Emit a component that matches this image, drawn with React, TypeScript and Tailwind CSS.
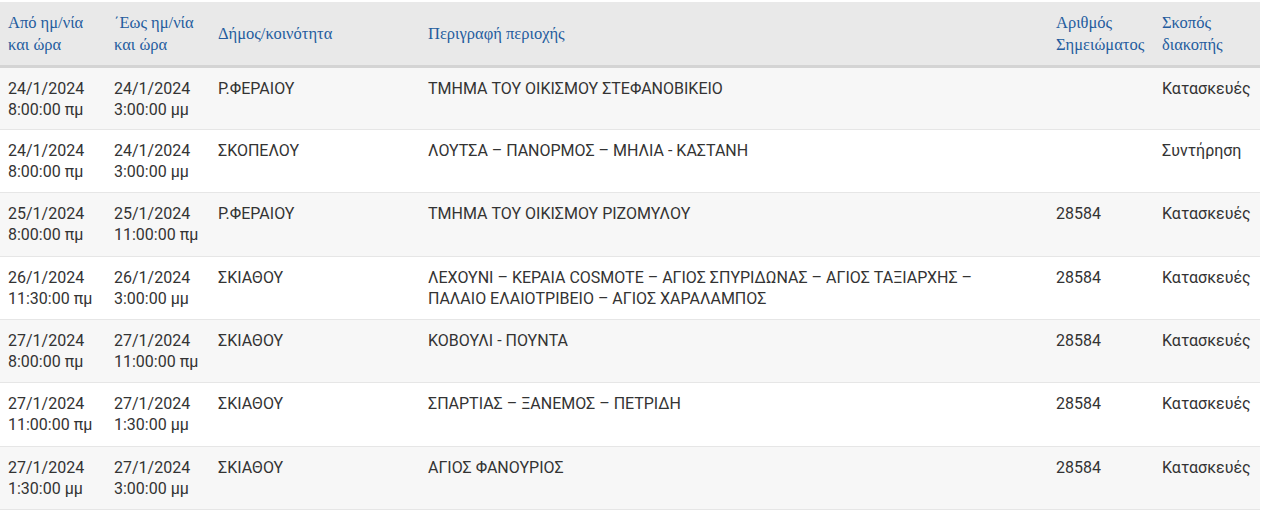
const rows = [
  { from: ['24/1/2024', '8:00:00 πμ'], to: ['24/1/2024', '3:00:00 μμ'], dim: 'Ρ.ΦΕΡΑΙΟΥ', desc: ['ΤΜΗΜΑ ΤΟΥ ΟΙΚΙΣΜΟΥ ΣΤΕΦΑΝΟΒΙΚΕΙΟ'], num: '', reason: 'Κατασκευές' },
  { from: ['24/1/2024', '8:00:00 πμ'], to: ['24/1/2024', '3:00:00 μμ'], dim: 'ΣΚΟΠΕΛΟΥ', desc: ['ΛΟΥΤΣΑ – ΠΑΝΟΡΜΟΣ – ΜΗΛΙΑ - ΚΑΣΤΑΝΗ'], num: '', reason: 'Συντήρηση' },
  { from: ['25/1/2024', '8:00:00 πμ'], to: ['25/1/2024', '11:00:00 πμ'], dim: 'Ρ.ΦΕΡΑΙΟΥ', desc: ['ΤΜΗΜΑ ΤΟΥ ΟΙΚΙΣΜΟΥ ΡΙΖΟΜΥΛΟΥ'], num: '28584', reason: 'Κατασκευές' },
  { from: ['26/1/2024', '11:30:00 πμ'], to: ['26/1/2024', '3:00:00 μμ'], dim: 'ΣΚΙΑΘΟΥ', desc: ['ΛΕΧΟΥΝΙ – ΚΕΡΑΙΑ COSMOTE – ΑΓΙΟΣ ΣΠΥΡΙΔΩΝΑΣ – ΑΓΙΟΣ ΤΑΞΙΑΡΧΗΣ –', 'ΠΑΛΑΙΟ ΕΛΑΙΟΤΡΙΒΕΙΟ – ΑΓΙΟΣ ΧΑΡΑΛΑΜΠΟΣ'], num: '28584', reason: 'Κατασκευές' },
  { from: ['27/1/2024', '8:00:00 πμ'], to: ['27/1/2024', '11:00:00 πμ'], dim: 'ΣΚΙΑΘΟΥ', desc: ['ΚΟΒΟΥΛΙ - ΠΟΥΝΤΑ'], num: '28584', reason: 'Κατασκευές' },
  { from: ['27/1/2024', '11:00:00 πμ'], to: ['27/1/2024', '1:30:00 μμ'], dim: 'ΣΚΙΑΘΟΥ', desc: ['ΣΠΑΡΤΙΑΣ – ΞΑΝΕΜΟΣ – ΠΕΤΡΙΔΗ'], num: '28584', reason: 'Κατασκευές' },
  { from: ['27/1/2024', '1:30:00 μμ'], to: ['27/1/2024', '3:00:00 μμ'], dim: 'ΣΚΙΑΘΟΥ', desc: ['ΑΓΙΟΣ ΦΑΝΟΥΡΙΟΣ'], num: '28584', reason: 'Κατασκευές' },
]

const headers = [
  { lines: ['Από ημ/νία', 'και ώρα'], w: 'w-[106px]' },
  { lines: ['΄Εως ημ/νία', 'και ώρα'], w: 'w-[104px]' },
  { lines: ['Δήμος/κοινότητα'], w: 'w-[210px]' },
  { lines: ['Περιγραφή περιοχής'], w: 'w-[628px]' },
  { lines: ['Αριθμός', 'Σημειώματος'], w: 'w-[106px]' },
  { lines: ['Σκοπός', 'διακοπής'], w: 'w-[106px]' },
]

const Lines = ({ lines }: { lines: string[] }) => (
  <>
    {lines.map((l, i) => (
      <div key={i} className="whitespace-nowrap">{l}</div>
    ))}
  </>
)

const App = () => {
  return (
    <div className="bg-white w-[1262px] h-[512px] pt-[2px] overflow-hidden">
      <table className="w-[1260px] table-fixed border-collapse">
        <thead>
          <tr className="bg-[#e9e9e9] border-b-[3px] border-[#d4d4d4]">
            {headers.map((h, i) => (
              <th
                key={i}
                className={`${h.w} h-[64px] px-2 pt-[2px] align-middle text-left font-normal text-[16.5px] leading-[22px] text-[#245c9e] font-['Liberation_Serif',serif]`}
              >
                <Lines lines={h.lines} />
              </th>
            ))}
          </tr>
        </thead>
        <tbody className="font-['Roboto',sans-serif] text-[16px] leading-[21px] text-[#333]">
          {rows.map((r, i) => (
            <tr key={i} className={`border-b border-[#e6e6e6] h-[63.4px] ${i % 2 === 0 ? 'bg-[#f7f7f7]' : 'bg-white'}`}>
              <td className="px-2 pt-[10px] align-top"><Lines lines={r.from} /></td>
              <td className="px-2 pt-[10px] align-top"><Lines lines={r.to} /></td>
              <td className="px-2 pt-[10px] align-top">{r.dim}</td>
              <td className="px-2 pt-[10px] align-top"><Lines lines={r.desc} /></td>
              <td className="px-2 pt-[10px] align-top">{r.num}</td>
              <td className="px-2 pt-[10px] align-top">{r.reason}</td>
            </tr>
          ))}
        </tbody>
      </table>
    </div>
  )
}

export default App
